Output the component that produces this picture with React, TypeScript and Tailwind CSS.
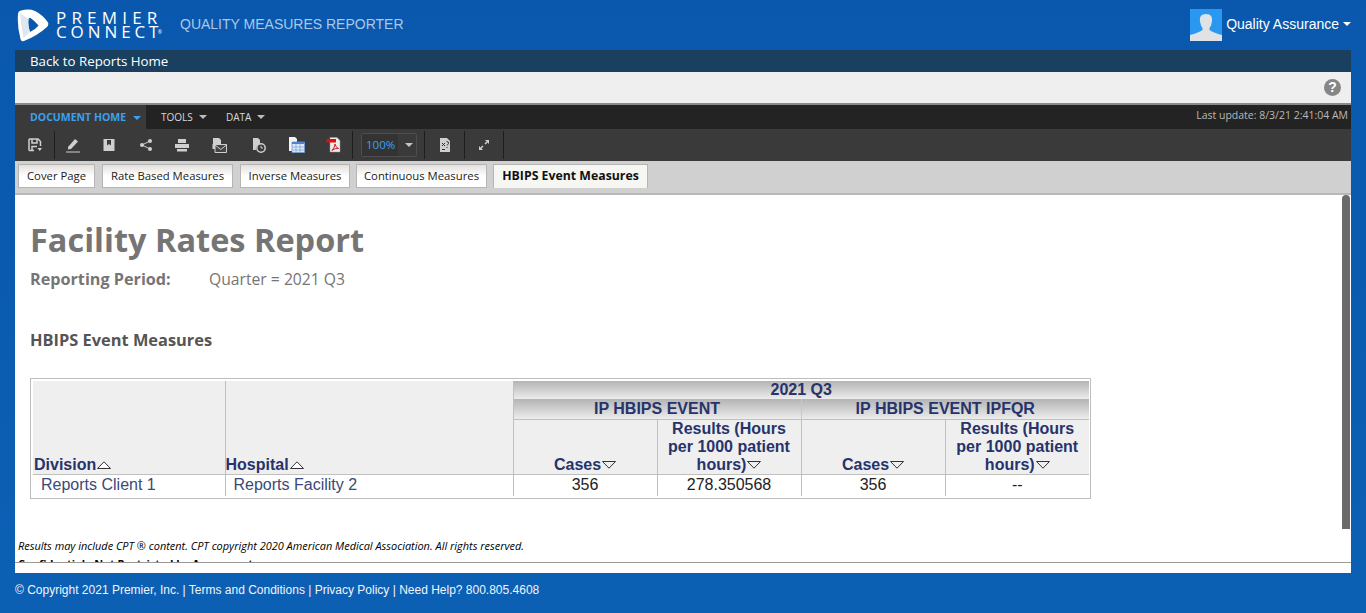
const tabs = [
  { label: 'Cover Page', className: 'w-[77px] mr-[1px]' },
  { label: 'Rate Based Measures', className: 'w-[131px] mr-[1px]' },
  { label: 'Inverse Measures', className: 'w-[110px]' },
  { label: 'Continuous Measures', className: 'w-[131px]' },
];

const caret = 'w-0 h-0 border-x-[4px] border-x-transparent border-t-[4px]';
const iconColor = 'text-[#cfcfcf]';

function SortUp() {
  return (
    <svg width="14" height="8" viewBox="0 0 14 8" className="inline-block ml-[1px]">
      <path d="M0.5 7.5 L7 0.8 L13.5 7.5 Z" fill="#fff" stroke="#333" strokeWidth="1" />
    </svg>
  );
}

function SortDown() {
  return (
    <svg width="14" height="8" viewBox="0 0 14 8" className="inline-block ml-[1px]">
      <path d="M0.5 0.5 L7 7.2 L13.5 0.5 Z" fill="#eee" stroke="#333" strokeWidth="1" />
    </svg>
  );
}

function Logo() {
  return (
    <svg width="33" height="33" viewBox="0 0 33 33" className="shrink-0">
      <path
        fillRule="evenodd"
        d="M1 5 Q1 2 4 1.500 Q12 -0.500 18 2 Q26 6 31 13.500 Q32 16 30 18 Q20 27 7 32 Q4 33 3.500 30 Q0 17 1 5 Z M11.500 10 Q10.500 16 13 23 Q18 21 21.500 16.500 Q18 12 13.500 9 Q12 8.500 11.500 10 Z"
        fill="#fff"
      />
      <path d="M3 4 Q4 16 6.500 29 L13 23 Q10.500 16 11.500 10 Z" fill="#dfe6ee" />
    </svg>
  );
}

function Separator() {
  return <div className="w-px h-[28px] bg-[#1e1e1e] shrink-0" />;
}

function ToolIcon({ children, className, width }: { children: React.ReactNode; className: string; width: string }) {
  return (
    <div className={`${width} flex justify-center shrink-0`}>
      <svg width="18" height="18" viewBox="0 0 18 18" className={className}>
        {children}
      </svg>
    </div>
  );
}

export default function App() {
  return (
    <div className="h-[613px] w-[1366px] overflow-hidden flex flex-col bg-gradient-to-b from-[#0958ad] to-[#0c60b4] font-['Liberation_Sans',sans-serif]">
      <header className="h-[50px] shrink-0 flex items-center pl-[17px] pr-[15px]">
        <Logo />
        <div className="relative ml-[6px] w-[108px] text-white font-['Open_Sans',sans-serif] font-medium text-[17px] leading-[13px] mb-[1px]">
          <div className="h-[14px] tracking-[5.200px]">PREMIER</div>
          <div className="h-[13px] tracking-[3.900px]">
            CONNEC<span className="tracking-normal">T</span>
          </div>
          <span className="absolute right-[2px] bottom-[3px] text-[5px] leading-[5px]">®</span>
        </div>
        <span className="ml-[16px] mb-[2px] text-[14px] text-[#a9c8ea]">QUALITY MEASURES REPORTER</span>
        <div className="ml-auto flex items-center">
          <div className="w-8 h-8 bg-[#2a98f0] flex items-end justify-center overflow-hidden">
            <svg width="32" height="32" viewBox="0 0 32 32">
              <path d="M16 5 C11 5 9.500 8 10 12 C10.500 15 11 17 12.500 19 L12.500 21 Q8 24 0 26 V32 H32 V26 Q24 24 19.500 21 L19.500 19 C21 17 21.500 15 22 12 C22.500 8 21 5 16 5 Z" fill="#dfe3e6" />
            </svg>
          </div>
          <span className="ml-[4px] mb-[2px] text-[14px] text-white">Quality Assurance</span>
          <div className={`ml-[4px] mb-[2px] ${caret} border-t-white`} />
        </div>
      </header>

      <div className="mx-[15px] flex flex-col flex-1 min-h-0">
        <div className="h-[22px] shrink-0 bg-[#1a3f5f] pl-[15px] pt-[2px] flex items-center font-['Open_Sans',sans-serif] text-[13.300px] text-white">
          Back to Reports Home
        </div>
        <div className="h-[31px] shrink-0 bg-[#efefef] flex items-center justify-end pr-[10px]">
          <div className="w-[17px] h-[17px] rounded-full bg-[#868686] text-white text-[14px] font-bold flex items-center justify-center">?</div>
        </div>
        <div className="h-[2px] shrink-0 bg-[#8a8a8a]" />

        <div className="h-[24px] shrink-0 bg-[#232323] flex items-stretch font-['Open_Sans',sans-serif] text-[10px]">
          <div className="w-[131px] bg-[#3a3a3a] flex items-center pl-[15px] pt-[1px] font-bold text-[10.500px] text-[#3ba0f0]">
            DOCUMENT HOME
            <div className={`ml-[7px] ${caret} border-t-[#3ba0f0]`} />
          </div>
          <div className="w-[80px] flex items-center pl-[15px] text-[#d8d8d8]">
            TOOLS
            <div className={`ml-[6px] ${caret} border-t-[#bdbdbd]`} />
          </div>
          <div className="flex items-center text-[#d8d8d8]">
            DATA
            <div className={`ml-[6px] ${caret} border-t-[#bdbdbd]`} />
          </div>
          <div className="ml-auto flex items-center pr-[3px] pb-[3px] text-[10.500px] text-[#b9b9b9]">Last update: 8/3/21 2:41:04 AM</div>
        </div>

        <div className="h-[32px] shrink-0 bg-[#3a3a3a] flex items-center">
          <ToolIcon width="w-[39px]" className={iconColor}>
            <path d="M3 3 H12 L14.500 5.500 V10 M14.500 10 M8 14.500 H3 Z" fill="none" stroke="currentColor" strokeWidth="1.500" />
            <path d="M3 3 V14.500 M6 3 V7 H11 V3 M6 14 V10.500 H11" fill="none" stroke="currentColor" strokeWidth="1.500" />
            <path d="M11.500 12 H16 L13.750 15 Z" fill="currentColor" />
          </ToolIcon>
          <Separator />
          <ToolIcon width="w-[36px]" className={iconColor}>
            <path d="M4 11 L11 3 L14 5.500 L7 13 L4 13.500 Z" fill="currentColor" />
            <path d="M2 16 H16" stroke="currentColor" strokeWidth="1" />
          </ToolIcon>
          <ToolIcon width="w-[36px]" className={iconColor}>
            <path d="M3.500 3 H14.500 V15 H3.500 Z" fill="currentColor" />
            <path d="M7 4 H11 V9.500 L9 8 L7 9.500 Z" fill="#3a3a3a" />
          </ToolIcon>
          <ToolIcon width="w-[37px]" className={iconColor}>
            <path d="M5 9 L13 5 M5 9 L13 13" stroke="currentColor" strokeWidth="1" />
            <circle cx="5" cy="9" r="2" fill="currentColor" />
            <circle cx="13" cy="5" r="2" fill="currentColor" />
            <circle cx="13" cy="13" r="2" fill="currentColor" />
          </ToolIcon>
          <ToolIcon width="w-[36px]" className={iconColor}>
            <path d="M5 3 H13 V7 H5 Z" fill="currentColor" />
            <path d="M2 8 H16 V12 H2 Z" fill="currentColor" />
            <path d="M4 13 H14 V15.500 H4 Z" fill="currentColor" />
          </ToolIcon>
          <ToolIcon width="w-[38px]" className={iconColor}>
            <path d="M3 2 H9 L11 4 V8 H3 Z" fill="currentColor" />
            <path d="M2.500 6 V13 H5 V8 H2.500 Z" fill="currentColor" />
            <path d="M5 8.500 H16.500 V16.500 H5 Z" fill="#444" stroke="currentColor" strokeWidth="1" />
            <path d="M5 9 L10.750 13.500 L16.500 9" fill="none" stroke="currentColor" strokeWidth="1" />
          </ToolIcon>
          <ToolIcon width="w-[39px]" className={iconColor}>
            <path d="M4 2 H9 L11 4 V8 A5 5 0 0 0 7 14 H4 Z" fill="currentColor" />
            <circle cx="12" cy="12" r="4.200" fill="#3a3a3a" stroke="currentColor" strokeWidth="1.500" />
            <path d="M12 9.800 V12 H14" stroke="currentColor" fill="none" />
          </ToolIcon>
          <ToolIcon width="w-[38px]" className={iconColor}>
            <path d="M2 1 H8 L10 3 V15 H2 Z" fill="#f2f4f7" />
            <path d="M5 6 H17.500 V16.500 H5 Z" fill="#dfe8f4" stroke="#6f9fd8" strokeWidth="0.800" />
            <path d="M5 6 H17.500 V8 H5 Z" fill="#4f84cc" />
            <path d="M5 11 H17.500 M5 14 H17.500 M9 8 V16.500 M13 8 V16.500" stroke="#7ea7da" strokeWidth="0.800" />
          </ToolIcon>
          <ToolIcon width="w-[37px]" className={iconColor}>
            <path d="M5 1.500 H12 L15 4.500 V16 H5 Z" fill="#ececec" stroke="#999" strokeWidth="0.500" />
            <path d="M1.500 3 H11 V6.500 H1.500 Z" fill="#e01010" />
            <path d="M7 14.500 Q10 11 10 8 Q11 12 13.500 12.500 Q9.500 12 7 14.500 Z" fill="none" stroke="#d02020" strokeWidth="1" />
          </ToolIcon>
          <Separator />
          <div className="ml-[8px] mr-[7px] w-[56px] h-[24px] flex items-center border border-[#4e4e4e] rounded-[2px] font-['Open_Sans',sans-serif]">
            <div className="w-[36px] pl-[4px] h-full flex items-center text-[11.500px] text-[#3ba0f0] bg-[#333333]">100%</div>
            <div className={`ml-[7px] ${caret} border-t-[#c4c4c4]`} />
          </div>
          <Separator />
          <ToolIcon width="w-[39px]" className={iconColor}>
            <path d="M4 2 H11 L14 5 V16 H4 Z" fill="currentColor" />
            <path d="M6 7 L9 10 M9 7 L6 10 M10.500 5.500 Q13 5.500 12.500 7.500 L11 9.500 M11 11 V12 M6 13.500 H9" stroke="#333" strokeWidth="1" fill="none" />
          </ToolIcon>
          <Separator />
          <ToolIcon width="w-[38px]" className={iconColor}>
            <path d="M10 4 H14 V8 Z M4 10 V14 H8 Z" fill="currentColor" />
            <path d="M12 6 L10 8 M6 12 L8 10" stroke="currentColor" strokeWidth="1.500" />
          </ToolIcon>
          <Separator />
        </div>

        <div className="h-[34px] shrink-0 bg-[#d0d0d0] border-b-2 border-b-[#b8b8b8] flex items-start pl-[3px] pt-[3px] gap-[6px] font-['Open_Sans',sans-serif]">
          {tabs.map((tab) => (
            <div key={tab.label} className={`${tab.className} h-[24px] border border-[#b5b5b5] bg-gradient-to-b from-[#e4e0dc] via-[#ffffff] to-[#ffffff] flex items-center justify-center text-[11.300px] text-[#1a1a1a]`}>
              {tab.label}
            </div>
          ))}
          <div className="w-[155px] h-[24px] border border-[#b5b5b5] border-b-0 bg-[#f6f6f2] flex items-center justify-center text-[12.300px] font-bold text-[#111]">
            HBIPS Event Measures
          </div>
        </div>

        <main className="relative h-[368px] shrink-0 bg-white overflow-hidden border-b border-b-[#9a9a9a]">
          <div className="absolute right-[1px] top-0 w-[8px] h-[334px] bg-[#6a6a6a] rounded-t-[4px]" />
          <div className="pl-[15px] pt-[23px] font-['Open_Sans',sans-serif]">
            <h1 className="text-[32.500px] leading-[44px] font-bold text-[#757575]">Facility Rates Report</h1>
            <div className="mt-[7px] flex text-[16.200px] leading-[20px] text-[#757575]">
              <span className="w-[179px] font-bold">Reporting Period:</span>
              <span className="text-[15.700px]">Quarter = 2021 Q3</span>
            </div>
            <h2 className="mt-[41px] text-[16.400px] leading-[20px] font-bold text-[#555555]">HBIPS Event Measures</h2>
          </div>

          <div className="ml-[15px] mt-[28px] w-[1061px] border border-[#bdbdbd] p-[2px]">
            <table className="w-[1056px] table-fixed border-collapse text-[16px] leading-[18px]">
              <colgroup>
                <col className="w-[192px]" />
                <col className="w-[288px]" />
                <col className="w-[144px]" />
                <col className="w-[144px]" />
                <col className="w-[144px]" />
                <col className="w-[144px]" />
              </colgroup>
              <thead className="font-bold text-[#27336a]">
                <tr className="h-[18px]">
                  <th rowSpan={3} className="align-bottom text-left bg-[#efefef] border border-[#c0c0c0] border-t-0 border-l-0 pl-[1px] font-bold">
                    Division<SortUp />
                  </th>
                  <th rowSpan={3} className="align-bottom text-left bg-[#efefef] border border-[#c0c0c0] border-t-0 font-bold">
                    Hospital<SortUp />
                  </th>
                  <th colSpan={4} className="text-center bg-gradient-to-b from-[#b4b4b4] to-[#ececec] font-bold">2021 Q3</th>
                </tr>
                <tr className="h-[20px]">
                  <th colSpan={2} className="text-center bg-gradient-to-b from-[#b4b4b4] to-[#ececec] border-r border-r-[#c8c8c8] font-bold">IP HBIPS EVENT</th>
                  <th colSpan={2} className="text-center bg-gradient-to-b from-[#b4b4b4] to-[#ececec] font-bold">IP HBIPS EVENT IPFQR</th>
                </tr>
                <tr className="h-[54px]">
                  <th className="align-bottom text-center bg-[#efefef] border border-[#c0c0c0] font-bold">Cases<SortDown /></th>
                  <th className="align-bottom text-center bg-[#efefef] border border-[#c0c0c0] font-bold">Results (Hours<br />per 1000 patient<br />hours)<SortDown /></th>
                  <th className="align-bottom text-center bg-[#efefef] border border-[#c0c0c0] font-bold">Cases<SortDown /></th>
                  <th className="align-bottom text-center bg-[#efefef] border border-[#c0c0c0] border-r-0 font-bold">Results (Hours<br />per 1000 patient<br />hours)<SortDown /></th>
                </tr>
              </thead>
              <tbody>
                <tr className="h-[22px]">
                  <td className="pl-[8px] pb-[1px] text-[#3a4a78] border border-[#c0c0c0] border-l-0 border-b-0">Reports Client 1</td>
                  <td className="pl-[8px] pb-[1px] text-[#3a4a78] border border-[#c0c0c0] border-b-0">Reports Facility 2</td>
                  <td className="pb-[1px] text-center text-[#222] border border-[#c0c0c0] border-b-0">356</td>
                  <td className="pb-[1px] text-center text-[#222] border border-[#c0c0c0] border-b-0">278.350568</td>
                  <td className="pb-[1px] text-center text-[#222] border border-[#c0c0c0] border-b-0">356</td>
                  <td className="pb-[1px] text-center text-[#222] border border-[#c0c0c0] border-b-0 border-r-0">--</td>
                </tr>
              </tbody>
            </table>
          </div>

          <div className="absolute left-[3px] top-[344px] font-['Open_Sans',sans-serif] text-[10.950px] leading-[14px] italic text-black">
            <p>Results may include CPT ® content. CPT copyright  2020 American Medical Association.  All rights reserved.</p>
            <p className="mt-[4px] font-bold not-italic">Confidential - Not Restricted by Agreement</p>
          </div>
        </main>
        <div className="h-[10px] shrink-0 bg-white" />
      </div>

      <footer className="h-[40px] shrink-0 pl-[15px] pt-[10px] text-[12px] leading-[14px] text-[#f0f4fa]">
        © Copyright 2021 Premier, Inc. | Terms and Conditions | Privacy Policy | Need Help? 800.805.4608
      </footer>
    </div>
  );
}
